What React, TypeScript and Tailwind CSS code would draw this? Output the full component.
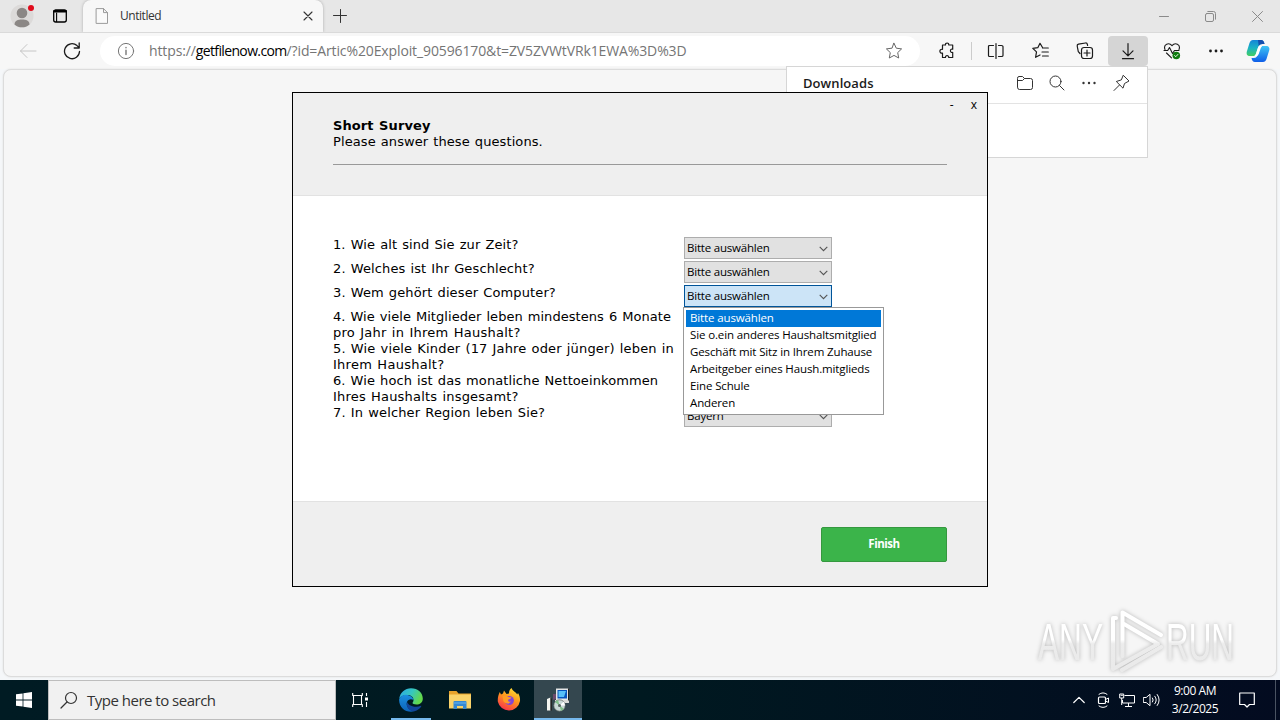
import React from "react";

type IconProps = { className?: string; children: React.ReactNode; box?: string };

function Glyph({ className = "", children, box = "0 0 20 20" }: IconProps) {
  return (
    <svg viewBox={box} className={`shrink-0 ${className}`} fill="none" stroke="currentColor" strokeLinecap="round" strokeLinejoin="round">
      {children}
    </svg>
  );
}

function TabStrip() {
  return (
    <div className="flex h-8 shrink-0 bg-[#e7e7e7]">
      <div className="flex w-[83px] items-center">
        <svg viewBox="0 0 26 26" className="ml-[9px] h-[26px] w-[26px]">
          <circle cx="13" cy="13" r="11.5" fill="#dcdad9" />
          <circle cx="13" cy="10" r="5.3" fill="#8b8785" />
          <path d="M5.500 21.500c0-4 3.500-5 7.500-5s7.500 1 7.500 5c-2 2-5 2.800-7.500 2.800s-5.500-.8-7.500-2.800z" fill="#8b8785" />
          <circle cx="22" cy="5" r="3" fill="#e00b1c" />
        </svg>
        <Glyph className="ml-[17px] h-4 w-4 text-black" box="0 0 16 16">
          <rect x="1.700" y="2" width="12.600" height="12" rx="2" strokeWidth="1.300" />
          <path d="M2.300 3.300h11.400" strokeWidth="2.600" />
          <path d="M4.600 5v8.500" strokeWidth="1.100" />
        </Glyph>
      </div>
      <div className="flex w-[240px] items-center rounded-t-lg bg-[#f7f7f7] shadow-[0_0_3px_#aaa]">
        <Glyph className="ml-3 h-4 w-[14px] text-[#9b9b9b]" box="0 0 14 16">
          <path d="M1.500.6h7l4 4v10.800h-11z M8.500.6v4h4" fill="#fafafa" />
        </Glyph>
        <span className="ml-[11px] w-[180px] text-[12px] tracking-[-0.45px] text-[#333]">Untitled</span>
        <Glyph className="ml-[3px] h-2.5 w-2.5 text-[#333]" box="0 0 10 10">
          <path d="M1 1l8 8M9 1L1 9" strokeWidth="1.100" />
        </Glyph>
      </div>
      <Glyph className="ml-[10px] mt-[9px] h-[14px] w-[14px] text-[#333]" box="0 0 14 14">
        <path d="M7.500 .5v13M.5 6.500h13" />
      </Glyph>
      <div className="ml-auto mr-[17px] flex items-center gap-[36px] text-[#8a8a8a]">
        <Glyph className="h-[11px] w-[10px]" box="0 0 10 11"><path d="M.5 5.500h9" /></Glyph>
        <Glyph className="h-[11px] w-[11px]" box="0 0 11 11">
          <rect x=".5" y="2.500" width="8" height="8" rx="1.500" />
          <path d="M2.800.5h5.700a2 2 0 0 1 2 2v5.700" />
        </Glyph>
        <Glyph className="h-[11px] w-[11px]" box="0 0 11 11"><path d="M.5.5l10 10M10.500.5l-10 10" /></Glyph>
      </div>
    </div>
  );
}

function Toolbar() {
  return (
    <div className="flex h-[37px] shrink-0 items-center border-t border-[#dadada] bg-[#f7f7f7] text-[#1b1b1b]">
      <Glyph className="ml-[19px] h-4 w-[18px] text-[#c6c6c6]" box="0 0 18 16">
        <path d="M17 8H1.500M8 1.500L1.500 8 8 14.500" />
      </Glyph>
      <Glyph className="ml-[26px] h-[18px] w-[18px]" box="0 0 18 18">
        <path d="M16.500 9.500A7.500 7.500 0 1 1 14 3.600l2 2M16.200 1v5h-5" strokeWidth="1.300" />
      </Glyph>
      <div className="ml-[19px] flex h-[30px] w-[820px] items-center rounded-full bg-white">
        <Glyph className="ml-[17px] h-[18px] w-[18px] text-[#777]" box="0 0 18 18">
          <circle cx="9" cy="9" r="7.600" />
          <path d="M9 8.300v4.200M9 5.500v.3" strokeWidth="1.400" />
        </Glyph>
        <span className="ml-[14px] w-[731px] whitespace-nowrap pb-px text-[14px] tracking-[-0.12px] text-[#757575]">
          https://<span className="tracking-[-0.64px] text-black">getfilenow.com</span>/?id=Artic%20Exploit_90596170&amp;t=ZV5ZVWtVRk1EWA%3D%3D
        </span>
        <Glyph className="ml-[5px] h-[18px] w-[18px] text-[#666]" box="0 0 18 18">
          <path d="M9 1.300l2.300 4.900 5.300.7-3.900 3.700 1 5.400L9 13.400 4.300 16l1-5.400L1.400 6.900l5.300-.7z" />
        </Glyph>
      </div>
      <Glyph className="ml-[18px] h-[18px] w-[18px]" box="0 0 18 18">
        <path d="M4.500 3h3c-.6-2.700 3.800-2.700 3.200 0h4v4.200c-3-1-3 4 0 3.200v5.100h-4c.5-2.500-3.800-2.500-3.200 0h-3v-4.400c-3.500.8-3.500-4.500 0-3.800z" strokeWidth="1.200" />
      </Glyph>
      <div className="ml-[15px] h-[18px] w-px bg-[#ccc]" />
      <Glyph className="ml-[15px] h-[18px] w-[18px]" box="0 0 18 18">
        <path d="M6.500 3.500h-4Q1.500 3.500 1.500 4.500v9q0 1 1 1h4M11.500 3.500h3q1.500 0 1.500 1v9q0 1-1.500 1h-3M9 1.500v15" strokeWidth="1.200" />
      </Glyph>
      <Glyph className="ml-[27px] h-[18px] w-[18px]" box="0 0 18 18">
        <path d="M10.500 5.500L8 1.300 5.800 5.700l-5 .7 3.700 3.500-.9 5.400L8 13M10.500 6H16.300M10 10h6.300M10.500 14H16.300" strokeWidth="1.200" />
      </Glyph>
      <Glyph className="ml-[26px] h-[18px] w-[18px]" box="0 0 18 18">
        <path d="M4 11.500L2.300 9.600 1.200 4Q1 2.500 2.500 2.200L9.500 1q1.500-.2 1.800 1.200l.3 1.300" strokeWidth="1.200" />
        <rect x="5.500" y="5.500" width="11" height="11" rx="2.500" strokeWidth="1.200" />
        <path d="M11 8v6M8 11h6" strokeWidth="1.200" />
      </Glyph>
      <div className="ml-[14px] flex h-[30px] w-10 items-center justify-center rounded bg-[#d5d5d5]">
        <Glyph className="h-[18px] w-[18px]" box="0 0 18 18">
          <path d="M9 1.500v12M4 8.800l5 5 5-5M3.500 16.700h11" strokeWidth="1.200" />
        </Glyph>
      </div>
      <Glyph className="ml-[15px] h-[18px] w-[18px]" box="0 0 18 18">
        <path d="M2 7.500C0 2 6 0 9 3.700 12 0 18 2 16 7.500M1 8.500h3.700l1.800-3 3 6 2-3h4.500M3.500 11l5 4.800" strokeWidth="1.100" />
        <circle cx="13.300" cy="13.500" r="3.800" fill="#107c10" stroke="none" />
        <path d="M11.600 13.600l1.200 1.100 2.100-2.300" stroke="#fff" strokeWidth=".9" />
      </Glyph>
      <Glyph className="ml-[28px] h-1 w-[14px]" box="0 0 14 4">
        <g fill="currentColor" stroke="none"><circle cx="1.500" cy="2" r="1.400" /><circle cx="7" cy="2" r="1.400" /><circle cx="12.500" cy="2" r="1.400" /></g>
      </Glyph>
      <svg viewBox="0 0 24 24" className="ml-[23px] h-6 w-6">
        <defs>
          <linearGradient id="cpA" x1="0" y1="0" x2="0" y2="1"><stop offset="0" stopColor="#1585d8" /><stop offset=".5" stopColor="#1bb3c4" /><stop offset="1" stopColor="#43cf62" /></linearGradient>
          <linearGradient id="cpB" x1="0" y1="0" x2="0" y2="1"><stop offset="0" stopColor="#3ec5f4" /><stop offset="1" stopColor="#0f5ee8" /></linearGradient>
        </defs>
        <path d="M7 1h8c2 0 3 1.500 3.500 4h-2c-3 0-4 2-4.700 4.500L10 15c-.6 1.600-1.500 2-3 2H4c-3 0-4-2-3-5L3.500 4Q4.500 1 7 1z" fill="url(#cpA)" />
        <path d="M12 1h3c2 0 3 1.500 3.500 4h-2c-2 0-3 .8-3.800 2z" fill="#154fae" />
        <path d="M17 23H9c-2 0-3-1.500-3.500-4h2c3 0 4-2 4.700-4.500L14 9c.6-1.600 1.500-2 3-2h3c3 0 4 2 3 5l-2.500 8q-1 3-3.500 3z" fill="url(#cpB)" />
        <path d="M11.800 9c.5-1.400 1.200-1.800 2.300-2h2l-1.300 2-2.100 6c-.5 1.400-1.200 1.800-2.300 2H8.600l1.200-2z" fill="#fff" />
      </svg>
    </div>
  );
}

function DownloadsPanel() {
  return (
    <div className="absolute left-[786px] top-[66px] h-[92px] w-[362px] border border-[#d6d6d6] bg-white">
      <div className="flex h-[37px] items-center border-b border-[#e3e3e3] pb-1 pl-4 text-[#333]">
        <span className="w-[213px] pt-px text-[13px] font-semibold tracking-[0.08px] text-[#1b1b1b]">Downloads</span>
        <Glyph className="h-[18px] w-[18px]" box="0 0 18 18">
          <path d="M1.500 4q0-1.500 1.500-1.500h3.500l2 2h6q2 0 2 2v7q0 2-2 2h-11q-2 0-2-2zM1.500 6.500h5l2-2" />
        </Glyph>
        <Glyph className="ml-[14px] h-[18px] w-[18px]" box="0 0 18 18">
          <circle cx="7.500" cy="7.500" r="5.500" /><path d="M11.500 11.500l4.500 4.500" />
        </Glyph>
        <Glyph className="ml-[16px] h-1 w-[14px]" box="0 0 14 4">
          <g fill="currentColor" stroke="none"><circle cx="1.500" cy="2" r="1.200" /><circle cx="7" cy="2" r="1.200" /><circle cx="12.500" cy="2" r="1.200" /></g>
        </Glyph>
        <Glyph className="ml-[16px] h-[18px] w-[18px]" box="0 0 18 18">
          <path d="M11.500 1.500L17 7 12.500 9.500l-1.500 4.700L4.300 7.500l4.700-1.500zM7.300 11.200L2 16.500" />
        </Glyph>
      </div>
    </div>
  );
}

function SelectBox({ value, open = false }: { value: string; open?: boolean }) {
  return (
    <div className={`mt-px flex h-[22px] w-[148px] items-center justify-between border pl-0.5 pr-[3px] text-[11.500px] tracking-[-0.2px] text-black ${open ? "border-[#005499] bg-[#cce4f7]" : "border-[#adadad] bg-[#e1e1e1]"}`}>
      <span className="whitespace-nowrap">{value}</span>
      <svg viewBox="0 0 9 6" className="mt-0.5 h-[6px] w-[9px]" fill="none" stroke="#555"><path d="M.7.8l3.800 3.800L8.300.8" strokeWidth="1.100" /></svg>
    </div>
  );
}

type Line = { text: string; spacing: string };

const questions: { lines: Line[]; value?: string; tall?: boolean; open?: boolean }[] = [
  { lines: [{ text: "1. Wie alt sind Sie zur Zeit?", spacing: "tracking-[0.1px]" }], value: "Bitte auswählen" },
  { lines: [{ text: "2. Welches ist Ihr Geschlecht?", spacing: "tracking-[0.12px]" }], value: "Bitte auswählen" },
  { lines: [{ text: "3. Wem gehört dieser Computer?", spacing: "tracking-[0.12px]" }], value: "Bitte auswählen", open: true },
  {
    lines: [
      { text: "4. Wie viele Mitglieder leben mindestens 6 Monate", spacing: "tracking-[0.05px]" },
      { text: "pro Jahr in Ihrem Haushalt?", spacing: "tracking-[0.26px]" },
    ],
    tall: true,
  },
  {
    lines: [
      { text: "5. Wie viele Kinder (17 Jahre oder jünger) leben in", spacing: "tracking-[0.16px]" },
      { text: "Ihrem Haushalt?", spacing: "tracking-[0.27px]" },
    ],
    tall: true,
  },
  {
    lines: [
      { text: "6. Wie hoch ist das monatliche Nettoeinkommen", spacing: "tracking-[0.09px]" },
      { text: "Ihres Haushalts insgesamt?", spacing: "tracking-[0.2px]" },
    ],
    tall: true,
  },
  { lines: [{ text: "7. In welcher Region leben Sie?", spacing: "tracking-[0.15px]" }], value: "Bayern" },
];

const options = ["Bitte auswählen", "Sie o.ein anderes Haushaltsmitglied", "Geschäft mit Sitz in Ihrem Zuhause", "Arbeitgeber eines Haush.mitglieds", "Eine Schule", "Anderen"];

function SurveyDialog() {
  return (
    <div className="absolute left-[292px] top-[92px] flex h-[495px] w-[696px] flex-col border border-black bg-white">
      <div className="h-[103px] shrink-0 border-b border-[#e2e2e2] bg-[#efefef] font-['DejaVu_Sans',sans-serif] text-[13px] leading-4 text-black">
        <div className="flex h-[25px] justify-end gap-[17px] pr-[10px] pt-[5px] font-['Open_Sans',sans-serif] text-[12px] leading-[14px]">
          <span>-</span>
          <span>x</span>
        </div>
        <div className="mx-10 h-[47px] border-b border-[#999] [word-spacing:0.8px]">
          <div className="font-bold tracking-[0.1px]">Short Survey</div>
          <div className="tracking-[0.09px]">Please answer these questions.</div>
        </div>
      </div>
      <div className="flex grow flex-col pl-10 pt-10 font-['DejaVu_Sans',sans-serif] text-[13px] leading-4 text-black">
        {questions.map((q) => (
          <div key={q.lines[0].text} className={`flex ${q.tall ? "h-8" : "h-6"}`}>
            <div className="w-[351px] shrink-0 whitespace-nowrap pt-px [word-spacing:0.8px]">
              {q.lines.map((l) => <div key={l.text} className={l.spacing}>{l.text}</div>)}
            </div>
            <div className="relative font-['Open_Sans',sans-serif]">
              <SelectBox value={q.value ?? ""} open={q.open} />
              {q.open && (
                <div className="absolute -left-px top-[23px] z-10 h-[108px] w-[201px] border border-[#999] bg-white p-0.5 text-[11.500px] leading-[15px] tracking-[-0.13px]">
                  {options.map((o, i) => (
                    <div key={o} className={`h-[17px] whitespace-nowrap pl-1 ${i === 0 ? "bg-[#0078d7] text-white" : "text-black"}`}>{o}</div>
                  ))}
                </div>
              )}
            </div>
          </div>
        ))}
      </div>
      <div className="flex h-[85px] shrink-0 justify-end border-t border-[#e2e2e2] bg-[#efefef] pr-10 pt-[25px]">
        <button className="h-[35px] w-[126px] rounded-[2px] border border-[#35983f] bg-[#3bb44a] pb-0.5 text-[11.500px] font-bold tracking-[-0.45px] text-white">Finish</button>
      </div>
    </div>
  );
}

function Watermark() {
  return (
    <svg viewBox="0 0 220 72" className="absolute left-[1030px] top-[606px] h-[72px] w-[220px] overflow-visible drop-shadow-[0_0_2px_rgba(0,0,0,0.25)]">
      <defs>
        <linearGradient id="wm" x1="0" y1="0" x2="0" y2="70" gradientUnits="userSpaceOnUse">
          <stop offset=".48" stopColor="#fff" /><stop offset=".54" stopColor="#ececec" /><stop offset="1" stopColor="#e9e9e9" />
        </linearGradient>
      </defs>
      <g fill="url(#wm)" fontFamily="Liberation Sans, sans-serif" fontSize="52">
        <text x="8" y="54" textLength="65" lengthAdjust="spacingAndGlyphs">ANY</text>
        <text x="136" y="54" textLength="68" lengthAdjust="spacingAndGlyphs">RUN</text>
      </g>
      <g fill="none" stroke="url(#wm)" strokeWidth="4" strokeLinejoin="round" strokeLinecap="round">
        <path d="M92.500 50V6.500L131 29" />
        <path d="M86 12h-3v51L128 38 94 18" />
        <path d="M92 64l39-23" />
      </g>
    </svg>
  );
}

function Taskbar() {
  return (
    <div className="flex h-10 shrink-0 bg-gradient-to-r from-[#001b23] via-[#001920] to-[#030b20] text-white">
      <div className="flex w-12 items-center justify-center">
        <svg viewBox="0 0 16 16" className="h-4 w-4" fill="#fff"><path d="M0 2.300L6.600 1.400v6.200H0zM7.400 1.300L16 0v7.600H7.400zM0 8.400h6.600v6.200L0 13.700zM7.400 8.400H16V16l-8.600-1.300z" /></svg>
      </div>
      <div className="flex w-72 items-center border border-[#bdbdbd] bg-[#f1f1f1] pl-[11px] text-[#333]">
        <Glyph className="h-[18px] w-[18px]" box="0 0 18 18"><circle cx="11" cy="7" r="5.500" strokeWidth="1.200" /><path d="M7 11L1 17" strokeWidth="1.200" /></Glyph>
        <span className="ml-[9px] pt-px text-[15px] tracking-[-0.5px]">Type here to search</span>
      </div>
      <div className="flex w-12 items-center justify-center">
        <Glyph className="h-4 w-4" box="0 0 16 16"><path d="M.7 1v2.500h9.600V1M.7 15v-2.500h9.600V15M1.500 4v8M9.500 4v8M14.500 1v3M14.500 10v5" strokeWidth="1.100" strokeLinecap="butt" /><path d="M13 5.500h3v3h-3z" fill="#fff" stroke="none" /></Glyph>
      </div>
      <div className="ml-[7px] flex w-10 items-center justify-center border-b-2 border-[#76b9ed] pt-0.5">
        <svg viewBox="0 0 24 24" className="h-6 w-6">
          <defs>
            <linearGradient id="edT" x1="0" y1="0" x2="1" y2=".4"><stop offset="0" stopColor="#2ba7e8" /><stop offset=".55" stopColor="#36c7c0" /><stop offset="1" stopColor="#63d84b" /></linearGradient>
            <linearGradient id="edB" x1="0" y1="0" x2="0" y2="1"><stop offset="0" stopColor="#1b8fe0" /><stop offset="1" stopColor="#0c62b8" /></linearGradient>
          </defs>
          <path d="M.2 11C1 4.500 6 .2 12 .2 19 .2 23.800 5 23.800 10.500c0 4-3 6-6.300 6-2.500 0-4-.8-4-1.500 0-.8 1-1 1-3 0-3-2.500-5-6.500-5-4 0-7 2-7.800 4z" fill="url(#edT)" />
          <path d="M.2 11C2 7.300 5.500 6.500 8.500 7c3.500.5 5.700 2.500 6 5-2-1.500-5.500-1-6.500 2-1.300 4 2 9 7.500 9-1 .5-2.300.8-3.500.8C5 23.800-.5 18 .2 11z" fill="url(#edB)" />
          <path d="M8 14c-1.500 4.500 2 9.500 7.500 9.200 3-.7 5.500-2.700 6.800-5 .2-.4-.1-.6-.5-.4-4.500 2.200-12 .7-13.800-3.800z" fill="#12459a" />
        </svg>
      </div>
      <div className="ml-[9px] flex w-10 items-center justify-center">
        <svg viewBox="0 0 22 20" className="h-5 w-[22px]">
          <path d="M0 1h7.500l2 2.500H22V18H0z" fill="#e8a32b" /><path d="M0 4.500h22V18.500H0z" fill="#fad36a" />
          <path d="M4.500 19v-7q0-1 1-1h11q1 0 1 1v7H14v-3H8v3z" fill="#3689d4" /><path d="M5 13h12" stroke="#68b4ee" />
        </svg>
      </div>
      <div className="ml-[9px] flex w-10 items-center justify-center">
        <svg viewBox="0 0 24 24" className="h-6 w-6">
          <defs><linearGradient id="ff" x1=".8" y1="0" x2=".3" y2="1"><stop offset="0" stopColor="#ffe238" /><stop offset=".45" stopColor="#ff9a1c" /><stop offset="1" stopColor="#f8324c" /></linearGradient></defs>
          <path d="M2.800 4l1.200 2.500L6 5.500 7 2.500 9.500 6 12 5.500c0-2.500.8-4.500 2.600-5.500.7 3 4.600 4 5.600 6.500l.8-1.500c1.800 3 2.200 5.500 2 8A11.300 11.300 0 0 1 .8 13.500C.6 9.500 1.300 7 2.800 4z" fill="url(#ff)" />
          <circle cx="12.300" cy="12.500" r="4.600" fill="#8245d8" />
          <path d="M5.500 8c2.500-.8 4.500-.3 5.500 1l3.500.6c-1 1.500-2.200 1.600-3.200 2-.5 1.700.5 2.300 2.500 2-1.500 3-6 2.300-7.500-.5z" fill="#ff9d25" />
        </svg>
      </div>
      <div className="ml-[5px] flex w-12 items-center justify-center border-b-2 border-[#76b9ed] bg-[#34474f] pt-0.5">
        <svg viewBox="0 0 24 24" className="h-6 w-6">
          <path d="M10 .5h12.500V12H10z" fill="#e4e6e6" /><path d="M11.500 2h9.500v8.500h-9.500z" fill="#0754bd" /><path d="M12.500 3h7.500l-2 6h-5.500z" fill="#58c0f8" />
          <path d="M9 12h12l2-1v4H9z" fill="#d9dad6" /><path d="M22.500 .5v12" stroke="#222" />
          <path d="M7 6h3v5l-3 1z" fill="#6c4a6e" />
          <path d="M1 11l3.500-1.500v13H1z" fill="#f5f5f0" /><path d="M4.500 9.500L6 11v11.500H4.500z" fill="#252525" />
          <circle cx="13.500" cy="17.500" r="5.700" fill="#c9d8d6" stroke="#59625f" strokeWidth=".7" /><path d="M13.500 17.500L9 14l3-2zM13.500 17.500l4.500 3.500-3 2z" fill="#7fbf88" /><path d="M13.500 17.500L18 13.500l1 4z" fill="#fff" />
          <circle cx="13.500" cy="17.500" r="1.500" fill="#54605e" />
        </svg>
      </div>
      <div className="ml-auto flex items-center">
        <Glyph className="h-2 w-3" box="0 0 12 8"><path d="M.8 6.500L6 1.300l5.200 5.200" strokeWidth="1.200" /></Glyph>
        <Glyph className="ml-[12px] h-4 w-[14px]" box="0 0 14 16">
          <rect x="1.500" y="5" width="7" height="6.500" rx="1" strokeWidth="1.200" /><path d="M8.500 7.500l3-1.500v4.500L8.500 9M2 2.300q4-3 8 0M2 14q4 3 8 0" />
        </Glyph>
        <Glyph className="ml-[8px] h-4 w-4" box="0 0 16 16">
          <path d="M5.500 3.500h10v7.500h-12V8M9.500 11v3M6 14.500h7M.7 2h4v4h-4zM2.700 6v7" strokeLinecap="butt" /><path d="M2 3.300h1.500" />
        </Glyph>
        <Glyph className="ml-[8px] h-4 w-[17px]" box="0 0 17 16">
          <path d="M.7 5.500h2.500L7 2.300v11.400L3.200 10.500H.7zM9.500 6q1.500 2 0 4M11.800 4.200q3 3.800 0 7.600M14.200 2.500q4 5.500 0 11" />
        </Glyph>
        <div className="ml-[11px] flex w-[48px] flex-col items-center whitespace-nowrap text-[12px] leading-[18px] tracking-[-0.45px]">
          <span>9:00 AM</span>
          <span>3/2/2025</span>
        </div>
        <Glyph className="ml-[20px] h-4 w-4" box="0 0 16 16"><path d="M.7 1h14.600v11.500H10.500L8 15l-2.500-2.500H.7z" strokeWidth="1.200" /></Glyph>
        <div className="ml-[20px] mr-[4px] h-10 w-px bg-[#4a5362]" />
      </div>
    </div>
  );
}

export default function App() {
  return (
    <div className="relative flex h-[720px] w-[1280px] flex-col overflow-hidden bg-[#f5f7f9] font-['Open_Sans',sans-serif]">
      <TabStrip />
      <Toolbar />
      <div className="mx-[3px] mb-[3px] grow rounded-lg border border-[#dcdcdc] bg-[#f6f6f6] shadow-[0_0_2px_#ddd]" />
      <Taskbar />
      <DownloadsPanel />
      <Watermark />
      <SurveyDialog />
    </div>
  );
}
